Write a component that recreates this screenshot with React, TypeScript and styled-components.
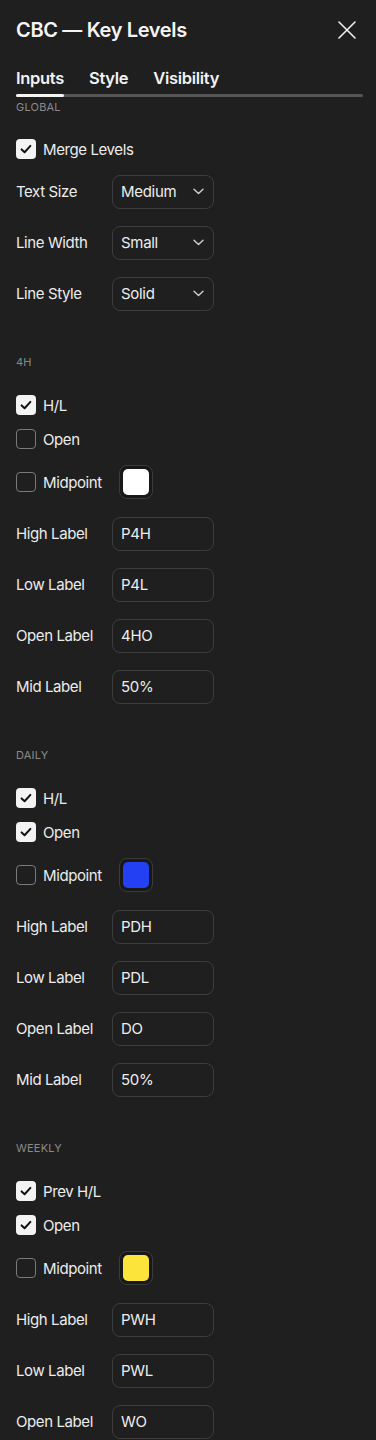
import React from "react";
import styled, { createGlobalStyle } from "styled-components";

const Global = createGlobalStyle`
  html, body { margin: 0; padding: 0; background: #1f1f1f; }
  body { font-family: Inter, "Noto Sans", "Liberation Sans", sans-serif; color: #f0f0f0; -webkit-font-smoothing: antialiased; }
  * { box-sizing: border-box; }
`;

const Page = styled.div`
  width: 376px;
  height: 1440px;
  background: #1f1f1f;
  overflow: hidden;
`;

const Header = styled.div`
  height: 60px;
  display: flex;
  align-items: center;
  justify-content: space-between;
  padding: 0 18px 0 16px;
`;

const Title = styled.h1`
  margin: 0;
  font-size: 20px;
  font-weight: 600;
  letter-spacing: -0.35px;
  color: #f4f4f4;
`;

const CloseBtn = styled.button`
  width: 22px;
  height: 22px;
  padding: 0;
  border: none;
  background: none;
  display: flex;
  align-items: center;
  justify-content: center;
`;

const Tabs = styled.div`
  display: flex;
  gap: 25px;
  padding: 0 16px;
  height: 24px;
  align-items: center;
  margin-top: 6px;
`;

const Tab = styled.div<{ $active?: boolean }>`
  font-size: 16.5px;
  font-weight: 600;
  letter-spacing: -0.3px;
  color: #f2f2f2;
  line-height: 24px;
`;

const Track = styled.div`
  margin: 4px 13px 0 16px;
  height: 3px;
  border-radius: 2px;
  background: #555555;
  position: relative;
`;

const TrackActive = styled.div`
  position: absolute;
  left: 0;
  top: 0;
  height: 3px;
  border-radius: 2px;
  background: #f4f4f4;
`;

const Content = styled.div`
  padding: 0 16px;
  display: flex;
  flex-direction: column;
  gap: 17px;
`;

const Section = styled.section`
  display: flex;
  flex-direction: column;
`;

const SectionLabel = styled.div<{ $first?: boolean }>`
  font-size: 11px;
  line-height: 14px;
  letter-spacing: 0.2px;
  color: #8a8a8a;
  padding: ${(p) => (p.$first ? "3px 0 18px" : "19px 0 19px")};
`;

const CheckRow = styled.label<{ $tall?: boolean }>`
  display: flex;
  align-items: center;
  height: ${(p) => (p.$tall ? "52px" : "34px")};
  gap: 7px;
  font-size: 15px;
  letter-spacing: -0.4px;
  color: #ececec;
`;

const Box = styled.span<{ $checked?: boolean }>`
  width: 20px;
  height: 20px;
  border-radius: 4px;
  flex: none;
  display: flex;
  align-items: center;
  justify-content: center;
  background: ${(p) => (p.$checked ? "#f3f3f3" : "transparent")};
  border: ${(p) => (p.$checked ? "none" : "1.5px solid #7a7a7a")};
`;

const Swatch = styled.span`
  margin-left: 10px;
  width: 34px;
  height: 34px;
  border-radius: 8px;
  border: 1px solid #3b3b3b;
  background: #181818;
  display: flex;
  align-items: center;
  justify-content: center;
`;

const SwatchFill = styled.span<{ $color: string }>`
  width: 26px;
  height: 26px;
  border-radius: 5px;
  background: ${(p) => p.$color};
`;

const FieldRow = styled.div`
  display: flex;
  align-items: center;
  height: 51px;
`;

const FieldLabel = styled.span`
  width: 96px;
  font-size: 15px;
  letter-spacing: -0.4px;
  color: #ececec;
`;

const Control = styled.div`
  width: 102px;
  height: 34px;
  border: 1px solid #3d3d3d;
  border-radius: 8px;
  display: flex;
  align-items: center;
  justify-content: space-between;
  padding: 0 9px 0 8px;
  font-size: 15px;
  letter-spacing: -0.3px;
  color: #ededed;
`;

const Check = () => (
  <svg width="14" height="14" viewBox="0 0 14 14">
    <path d="M2.6 7.4 L5.6 10.2 L11.4 3.9" fill="none" stroke="#111" strokeWidth="2" strokeLinecap="round" strokeLinejoin="round" />
  </svg>
);

const Chevron = () => (
  <svg width="11" height="7" viewBox="0 0 11 7">
    <path d="M1 1.2 L5.5 5.5 L10 1.2" fill="none" stroke="#cfcfcf" strokeWidth="1.4" strokeLinecap="round" strokeLinejoin="round" />
  </svg>
);

const CheckItem = ({ label, checked, tall, swatch }: { label: string; checked?: boolean; tall?: boolean; swatch?: string }) => (
  <CheckRow $tall={tall}>
    <Box $checked={checked}>{checked && <Check />}</Box>
    {label}
    {swatch && (
      <Swatch>
        <SwatchFill $color={swatch} />
      </Swatch>
    )}
  </CheckRow>
);

const SelectField = ({ label, value }: { label: string; value: string }) => (
  <FieldRow>
    <FieldLabel>{label}</FieldLabel>
    <Control>
      {value}
      <Chevron />
    </Control>
  </FieldRow>
);

const TextField = ({ label, value }: { label: string; value: string }) => (
  <FieldRow>
    <FieldLabel>{label}</FieldLabel>
    <Control>{value}</Control>
  </FieldRow>
);

type Group = {
  title: string;
  checks: { label: string; checked: boolean }[];
  color: string;
  labels: [string, string][];
};

const groups: Group[] = [
  {
    title: "4H",
    checks: [
      { label: "H/L", checked: true },
      { label: "Open", checked: false },
    ],
    color: "#ffffff",
    labels: [
      ["High Label", "P4H"],
      ["Low Label", "P4L"],
      ["Open Label", "4HO"],
      ["Mid Label", "50%"],
    ],
  },
  {
    title: "DAILY",
    checks: [
      { label: "H/L", checked: true },
      { label: "Open", checked: true },
    ],
    color: "#2341f2",
    labels: [
      ["High Label", "PDH"],
      ["Low Label", "PDL"],
      ["Open Label", "DO"],
      ["Mid Label", "50%"],
    ],
  },
  {
    title: "WEEKLY",
    checks: [
      { label: "Prev H/L", checked: true },
      { label: "Open", checked: true },
    ],
    color: "#fde43a",
    labels: [
      ["High Label", "PWH"],
      ["Low Label", "PWL"],
      ["Open Label", "WO"],
    ],
  },
];

export default function App() {
  return (
    <Page>
      <Global />
      <Header>
        <Title>CBC — Key Levels</Title>
        <CloseBtn aria-label="Close">
          <svg width="18" height="18" viewBox="0 0 18 18">
            <path d="M1 1 L17 17 M17 1 L1 17" stroke="#f0f0f0" strokeWidth="1.6" strokeLinecap="round" />
          </svg>
        </CloseBtn>
      </Header>
      <Tabs>
        <Tab $active>Inputs</Tab>
        <Tab>Style</Tab>
        <Tab>Visibility</Tab>
      </Tabs>
      <Track>
        <TrackActive style={{ width: 48 }} />
      </Track>
      <Content>
        <Section>
          <SectionLabel $first>GLOBAL</SectionLabel>
          <CheckItem label="Merge Levels" checked />
          <SelectField label="Text Size" value="Medium" />
          <SelectField label="Line Width" value="Small" />
          <SelectField label="Line Style" value="Solid" />
        </Section>
        {groups.map((g) => (
          <Section key={g.title}>
            <SectionLabel>{g.title}</SectionLabel>
            {g.checks.map((c) => (
              <CheckItem key={c.label} label={c.label} checked={c.checked} />
            ))}
            <CheckItem label="Midpoint" tall swatch={g.color} />
            {g.labels.map(([l, v]) => (
              <TextField key={l} label={l} value={v} />
            ))}
          </Section>
        ))}
      </Content>
    </Page>
  );
}
